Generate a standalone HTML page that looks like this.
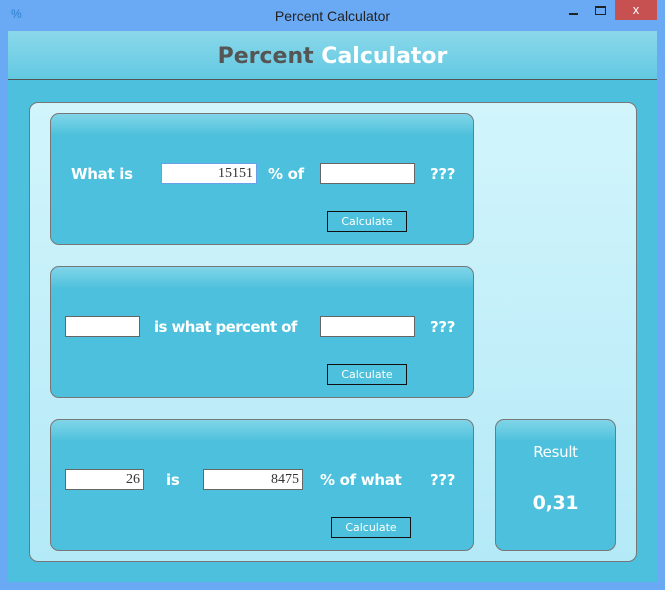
<!DOCTYPE html>
<html><head><style>
*{margin:0;padding:0;box-sizing:border-box}
body{width:665px;height:590px;background:#6aaaf5;position:relative;overflow:hidden;font-family:"DejaVu Sans","Liberation Sans",sans-serif}
.abs{position:absolute}
.tb{left:0;top:1px;width:665px;height:31px;font-family:"Liberation Sans",sans-serif;font-size:14px;color:#222;text-align:center;line-height:31px}
.client{left:8px;top:31px;width:649px;height:551px;background:#4cc0dc}
.hdr{left:8px;top:31px;width:649px;height:49px;background:linear-gradient(#8bd8ea,#62c9e2);border-bottom:1px solid #555;text-align:center;font-size:22px;font-weight:bold;line-height:52px;color:#555}
.inner{left:29px;top:102px;width:608px;height:460px;border:1px solid #777;border-radius:9px;background:linear-gradient(#d2f5fc,#b4e9f7)}
.pn{border:1px solid #777;border-radius:9px;background:linear-gradient(#80d5e8 0px,#4cc0dc 22px,#4cc0dc)}
.t{position:absolute;color:#fff;font-size:15px;font-weight:bold;white-space:nowrap;letter-spacing:-0.3px}
.in{position:absolute;background:#fff;border:1px solid #666;height:21px;font-family:"Liberation Serif",serif;font-size:14px;color:#333;text-align:right;padding-right:3px;line-height:19px}
.btn{position:absolute;border:1px solid #111;width:80px;height:21px;color:#fff;font-size:11px;text-align:center;line-height:19px}
</style></head><body>
<div class="abs tb">Percent Calculator</div>
<div class="abs" style="left:11px;top:7px;color:#2a7fd0;font-size:12px;font-family:'Liberation Sans'">%</div>
<div class="abs" style="left:569px;top:13px;width:9px;height:2px;background:#222"></div>
<div class="abs" style="left:595px;top:6px;width:11px;height:9px;border:1px solid #222;border-top-width:2px"></div>
<div class="abs" style="left:615px;top:0;width:42px;height:20px;background:#c75050;color:#fff;text-align:center;font-family:'Liberation Sans';font-size:13px;line-height:20px">x</div>
<div class="abs client"></div>
<div class="abs hdr">Percent <span style="color:#fff">Calculator</span></div>
<div class="abs inner"></div>

<div class="abs pn" style="left:50px;top:113px;width:424px;height:132px"></div>
<div class="t" style="left:71px;top:165px">What is</div>
<div class="in" style="left:161px;top:163px;width:96px;border-color:#6aa0e8">15151</div>
<div class="t" style="left:268px;top:165px">% of</div>
<div class="in" style="left:320px;top:163px;width:95px"></div>
<div class="t" style="left:430px;top:165px">???</div>
<div class="btn" style="left:327px;top:211px">Calculate</div>

<div class="abs pn" style="left:50px;top:266px;width:424px;height:132px"></div>
<div class="in" style="left:65px;top:316px;width:75px"></div>
<div class="t" style="left:154px;top:318px;letter-spacing:-0.6px">is what percent of</div>
<div class="in" style="left:320px;top:316px;width:95px"></div>
<div class="t" style="left:430px;top:318px">???</div>
<div class="btn" style="left:327px;top:364px">Calculate</div>

<div class="abs pn" style="left:50px;top:419px;width:424px;height:132px"></div>
<div class="in" style="left:65px;top:469px;width:79px">26</div>
<div class="t" style="left:166px;top:471px">is</div>
<div class="in" style="left:203px;top:469px;width:100px">8475</div>
<div class="t" style="left:320px;top:471px">% of what</div>
<div class="t" style="left:430px;top:471px">???</div>
<div class="btn" style="left:331px;top:517px">Calculate</div>

<div class="abs pn" style="left:495px;top:419px;width:121px;height:132px"></div>
<div class="t" style="left:495px;width:121px;text-align:center;top:443px;font-weight:normal">Result</div>
<div class="t" style="left:495px;width:121px;text-align:center;top:492px;font-size:19px">0,31</div>
</body></html>
